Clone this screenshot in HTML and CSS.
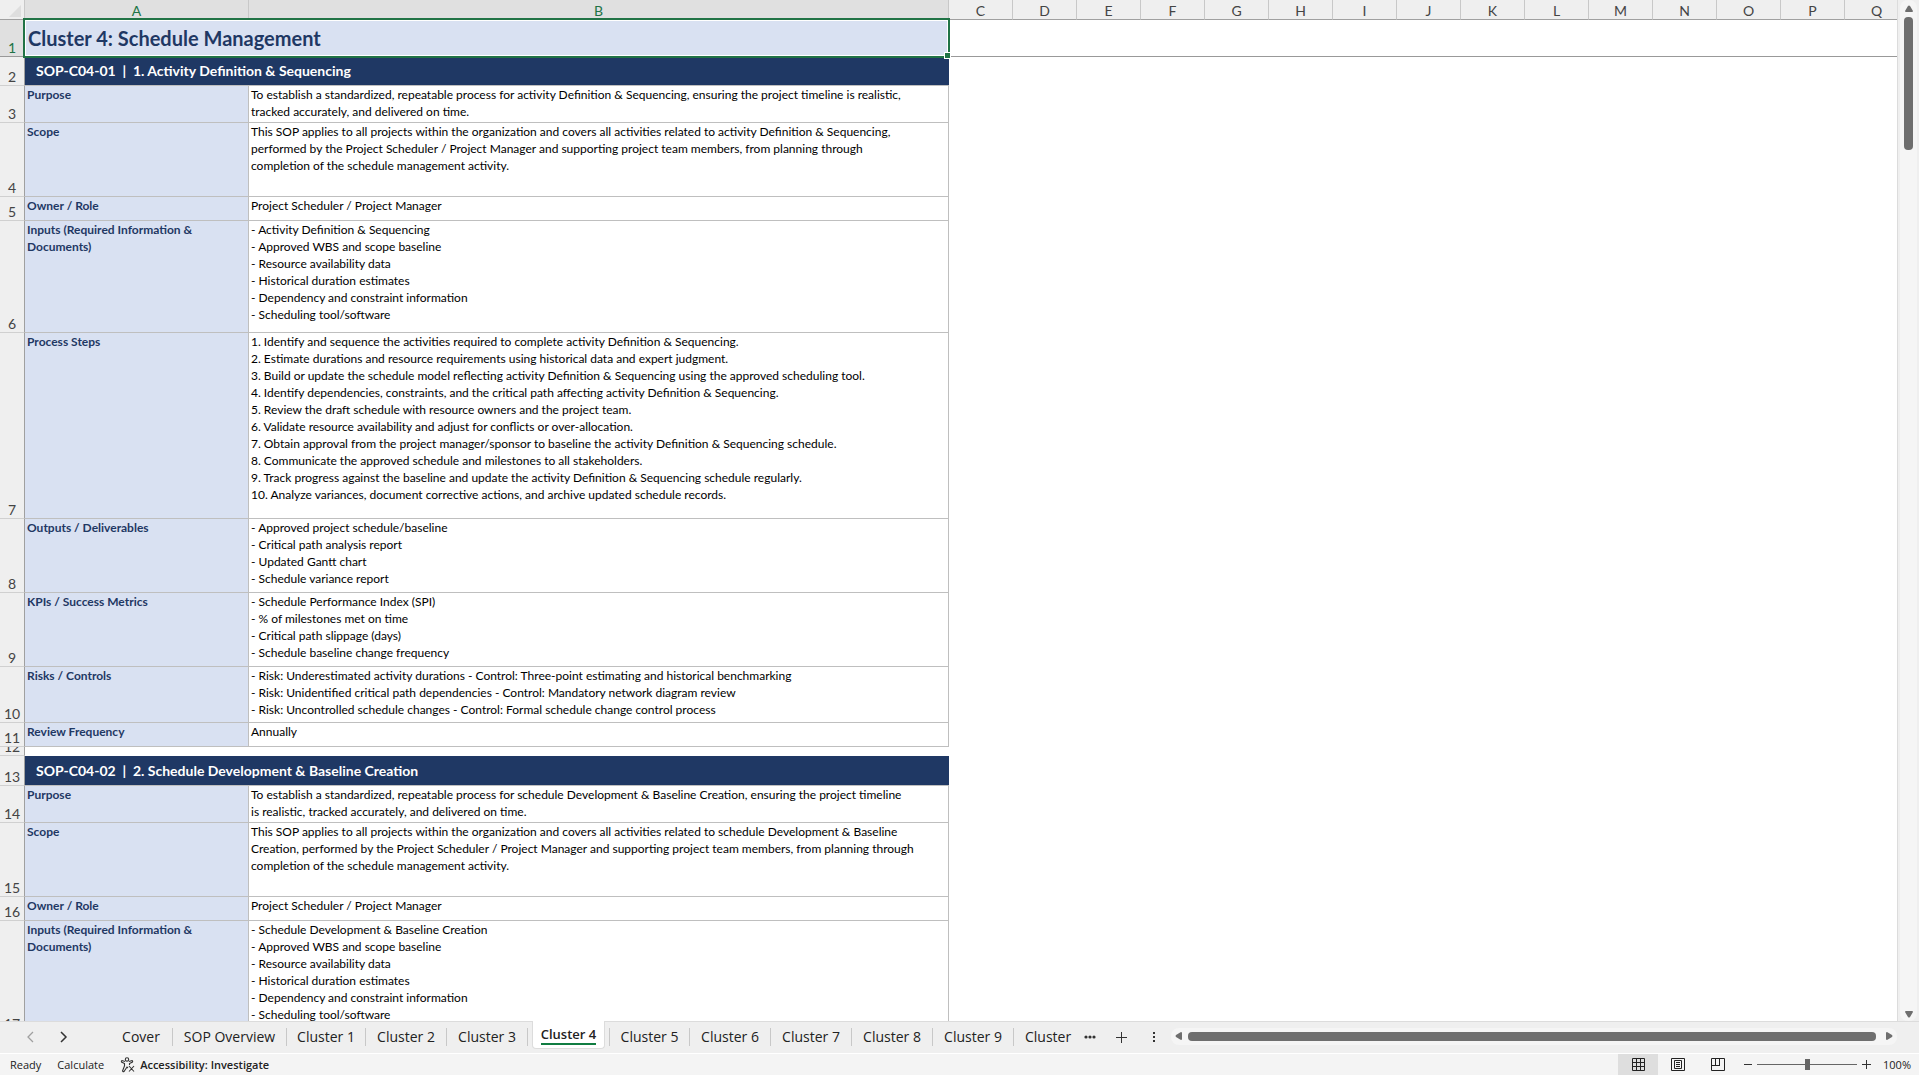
FILE: index.html
```html
<!DOCTYPE html>
<html lang="en">
<head>
    <meta charset="UTF-8">
    <meta name="viewport" content="width=device-width, initial-scale=1.0">
    <title>Cluster 4: Schedule Management</title>
    <link rel="stylesheet" href="styles.css">
</head>
<body>
    <main class="workspace">
        <div class="grid">
            <table class="sheet">
                <colgroup>
                    <col class="col-num">
                    <col class="col-a">
                    <col class="col-b">
                    <col span="15" class="col-std">
                </colgroup>
                <thead>
                    <tr>
                        <th class="corner"><svg width="12" height="12" viewBox="0 0 12 12"><path d="M12 0V12H0Z" fill="#dedede"/></svg></th>
                        <th class="active">A</th>
                        <th class="active">B</th>
                        <th>C</th><th>D</th><th>E</th><th>F</th><th>G</th><th>H</th><th>I</th><th>J</th><th>K</th><th>L</th><th>M</th><th>N</th><th>O</th><th>P</th><th>Q</th>
                    </tr>
                </thead>
                <tbody>
                    <tr class="row-title">
                        <th class="active">1</th>
                        <td class="title" colspan="2">Cluster 4: Schedule Management<span class="selection"></span></td>
                        <td class="blank" colspan="15"></td>
                    </tr>
                    <tr class="row-band">
                        <th>2</th>
                        <td class="band" colspan="2">SOP-C04-01 &nbsp;|&nbsp; 1. Activity Definition &amp; Sequencing</td>
                    </tr>
                    <tr class="row-2">
                        <th>3</th>
                        <td class="label">Purpose</td>
                        <td class="text">To establish a standardized, repeatable process for activity Definition &amp; Sequencing, ensuring the project timeline is realistic,<br>tracked accurately, and delivered on time.</td>
                    </tr>
                    <tr class="row-4">
                        <th>4</th>
                        <td class="label">Scope</td>
                        <td class="text">This SOP applies to all projects within the organization and covers all activities related to activity Definition &amp; Sequencing,<br>performed by the Project Scheduler / Project Manager and supporting project team members, from planning through<br>completion of the schedule management activity.</td>
                    </tr>
                    <tr class="row-1">
                        <th>5</th>
                        <td class="label">Owner / Role</td>
                        <td class="text">Project Scheduler / Project Manager</td>
                    </tr>
                    <tr class="row-6">
                        <th>6</th>
                        <td class="label">Inputs (Required Information &amp;<br>Documents)</td>
                        <td class="text">- Activity Definition &amp; Sequencing<br>- Approved WBS and scope baseline<br>- Resource availability data<br>- Historical duration estimates<br>- Dependency and constraint information<br>- Scheduling tool/software</td>
                    </tr>
                    <tr class="row-10">
                        <th>7</th>
                        <td class="label">Process Steps</td>
                        <td class="text">1. Identify and sequence the activities required to complete activity Definition &amp; Sequencing.<br>2. Estimate durations and resource requirements using historical data and expert judgment.<br>3. Build or update the schedule model reflecting activity Definition &amp; Sequencing using the approved scheduling tool.<br>4. Identify dependencies, constraints, and the critical path affecting activity Definition &amp; Sequencing.<br>5. Review the draft schedule with resource owners and the project team.<br>6. Validate resource availability and adjust for conflicts or over-allocation.<br>7. Obtain approval from the project manager/sponsor to baseline the activity Definition &amp; Sequencing schedule.<br>8. Communicate the approved schedule and milestones to all stakeholders.<br>9. Track progress against the baseline and update the activity Definition &amp; Sequencing schedule regularly.<br>10. Analyze variances, document corrective actions, and archive updated schedule records.</td>
                    </tr>
                    <tr class="row-4">
                        <th>8</th>
                        <td class="label">Outputs / Deliverables</td>
                        <td class="text">- Approved project schedule/baseline<br>- Critical path analysis report<br>- Updated Gantt chart<br>- Schedule variance report</td>
                    </tr>
                    <tr class="row-4">
                        <th>9</th>
                        <td class="label">KPIs / Success Metrics</td>
                        <td class="text">- Schedule Performance Index (SPI)<br>- % of milestones met on time<br>- Critical path slippage (days)<br>- Schedule baseline change frequency</td>
                    </tr>
                    <tr class="row-3">
                        <th>10</th>
                        <td class="label">Risks / Controls</td>
                        <td class="text">- Risk: Underestimated activity durations - Control: Three-point estimating and historical benchmarking<br>- Risk: Unidentified critical path dependencies - Control: Mandatory network diagram review<br>- Risk: Uncontrolled schedule changes - Control: Formal schedule change control process</td>
                    </tr>
                    <tr class="row-1">
                        <th>11</th>
                        <td class="label">Review Frequency</td>
                        <td class="text">Annually</td>
                    </tr>
                    <tr class="row-gap">
                        <th><div class="clip">12</div></th>
                        <td colspan="2"></td>
                    </tr>
                    <tr class="row-band-tall">
                        <th>13</th>
                        <td class="band" colspan="2">SOP-C04-02 &nbsp;|&nbsp; 2. Schedule Development &amp; Baseline Creation</td>
                    </tr>
                    <tr class="row-2">
                        <th>14</th>
                        <td class="label">Purpose</td>
                        <td class="text">To establish a standardized, repeatable process for schedule Development &amp; Baseline Creation, ensuring the project timeline<br>is realistic, tracked accurately, and delivered on time.</td>
                    </tr>
                    <tr class="row-4">
                        <th>15</th>
                        <td class="label">Scope</td>
                        <td class="text">This SOP applies to all projects within the organization and covers all activities related to schedule Development &amp; Baseline<br>Creation, performed by the Project Scheduler / Project Manager and supporting project team members, from planning through<br>completion of the schedule management activity.</td>
                    </tr>
                    <tr class="row-1">
                        <th>16</th>
                        <td class="label">Owner / Role</td>
                        <td class="text">Project Scheduler / Project Manager</td>
                    </tr>
                    <tr class="row-6">
                        <th>17</th>
                        <td class="label">Inputs (Required Information &amp;<br>Documents)</td>
                        <td class="text">- Schedule Development &amp; Baseline Creation<br>- Approved WBS and scope baseline<br>- Resource availability data<br>- Historical duration estimates<br>- Dependency and constraint information<br>- Scheduling tool/software</td>
                    </tr>
                </tbody>
            </table>
        </div>
        <div class="vscroll">
            <button class="arrow" aria-label="Scroll up"><svg width="10" height="8" viewBox="0 0 10 8"><path d="M4 1Q5 0 6 1L9 6Q9 7 8 7H2Q1 7 1 6Z" fill="#6e6e6e"/></svg></button>
            <div class="vthumb"></div>
            <button class="arrow arrow-end" aria-label="Scroll down"><svg width="10" height="8" viewBox="0 0 10 8"><path d="M4 7Q5 8 6 7L9 2Q9 1 8 1H2Q1 1 1 2Z" fill="#6e6e6e"/></svg></button>
        </div>
    </main>

    <nav class="tabbar">
        <div class="tab-arrows">
            <button aria-label="Previous sheet"><svg width="8" height="12" viewBox="0 0 8 12"><path d="M6 1L1 6L6 11" fill="none" stroke="#a0a0a0" stroke-width="1.3"/></svg></button>
            <button aria-label="Next sheet"><svg width="8" height="12" viewBox="0 0 8 12"><path d="M1 1L6 6L1 11" fill="none" stroke="#333" stroke-width="1.5"/></svg></button>
        </div>
        <div class="tabs">
            <button class="tab tab-cover">Cover</button>
            <button class="tab tab-overview">SOP Overview</button>
            <button class="tab tab-first">Cluster 1</button>
            <button class="tab">Cluster 2</button>
            <button class="tab">Cluster 3</button>
            <button class="tab current"><span>Cluster 4</span></button>
            <button class="tab tab-next">Cluster 5</button>
            <button class="tab">Cluster 6</button>
            <button class="tab">Cluster 7</button>
            <button class="tab">Cluster 8</button>
            <button class="tab">Cluster 9</button>
            <button class="tab tab-cut">Cluster 10</button>
        </div>
        <div class="tab-tools">
            <button aria-label="More sheets"><svg width="12" height="4" viewBox="0 0 12 4"><g fill="#333"><circle cx="2" cy="2" r="1.6"/><circle cx="6" cy="2" r="1.6"/><circle cx="10" cy="2" r="1.6"/></g></svg></button>
            <button aria-label="New sheet"><svg width="11" height="11" viewBox="0 0 11 11"><path d="M5.5 0V11M0 5.5H11" stroke="#333"/></svg></button>
            <button class="tab-resize" aria-label="Resize tabs"><svg width="2" height="10" viewBox="0 0 2 10"><path d="M0 0H2V2H0ZM0 4H2V6H0ZM0 8H2V10H0Z" fill="#333"/></svg></button>
        </div>
        <div class="hscroll">
            <button class="arrow" aria-label="Scroll left"><svg width="8" height="10" viewBox="0 0 8 10"><path d="M1 4Q0 5 1 6L6 9Q7 9 7 8V2Q7 1 6 1Z" fill="#6e6e6e"/></svg></button>
            <div class="hthumb"></div>
            <button class="arrow" aria-label="Scroll right"><svg width="8" height="10" viewBox="0 0 8 10"><path d="M7 4Q8 5 7 6L2 9Q1 9 1 8V2Q1 1 2 1Z" fill="#6e6e6e"/></svg></button>
        </div>
    </nav>

    <footer class="status">
        <span>Ready</span>
        <span>Calculate</span>
        <button class="access">
            <svg width="16" height="16" viewBox="0 0 16 16" fill="none" stroke="#333" stroke-width="1.1"><circle cx="7" cy="2.500" r="1.700"/><path d="M5 4.500L2 3.500Q1 4 1.500 5L4.500 6.500V9L2.500 14Q3 15 4 14.500L7 10L8 11M9 4.500L12 3.500Q13 4 12.500 5L9.500 6.500V8M9 9L14 14.500M14 9L9 14.500"/></svg>
            Accessibility: Investigate
        </button>
        <div class="views">
            <button class="view on" aria-label="Normal"><svg width="13" height="13" viewBox="0 0 13 13" fill="none" stroke="#222"><path d="M.5 .5H12.500V12.500H.5ZM4.500 0V13M8.500 0V13M0 4.500H13M0 8.500H13"/></svg></button>
            <button class="view" aria-label="Page Layout"><svg width="14" height="13" viewBox="0 0 14 13" fill="none" stroke="#222"><path d="M.5 .5H13.500V12.500H.5ZM3.500 2.500H10.500V10.500H3.500ZM5 4.500H9M5 6.500H9M5 8.500H9"/></svg></button>
            <button class="view" aria-label="Page Break Preview"><svg width="14" height="13" viewBox="0 0 14 13" fill="none" stroke="#222"><path d="M.5 .5H13.500V12.500H.5ZM4.500 0V7.500M0 7.500H9M8.500 0V8"/></svg></button>
        </div>
        <div class="zoom">
            <button aria-label="Zoom out"><svg width="8" height="9" viewBox="0 0 8 9"><path d="M0 4.500H8" stroke="#333"/></svg></button>
            <input type="range" min="0" max="100" value="50" aria-label="Zoom">
            <button aria-label="Zoom in"><svg width="9" height="9" viewBox="0 0 9 9"><path d="M0 4.500H9M4.500 0V9" stroke="#333"/></svg></button>
            <span class="percent">100%</span>
        </div>
    </footer>
</body>
</html>
```
FILE: styles.css
```css
* {
    box-sizing: border-box;
}

body {
    margin: 0;
    height: 100vh;
    display: flex;
    flex-direction: column;
    overflow: hidden;
    background-color: #efefef;
    color: #222;
    font-family: "Open Sans", "Noto Sans", sans-serif;
    font-size: 11px;
}

button {
    padding: 0;
    border: 0;
    background: none;
    color: inherit;
    font: inherit;
}

svg {
    display: block;
}

/* Worksheet */
.workspace {
    flex: 1;
    min-height: 0;
    display: flex;
}

.grid {
    flex: 1;
    min-width: 0;
    overflow: hidden;
    background-color: #fff;
    border-right: 1px solid #dcdcdc;
}

.sheet {
    width: 1909px;
    table-layout: fixed;
    border-collapse: separate;
    border-spacing: 0;
    font-family: Lato, "Liberation Sans", sans-serif;
}

.col-num { width: 25px; }
.col-a { width: 224px; }
.col-b { width: 700px; }
.col-std { width: 64px; }

th, td {
    padding: 0;
}

th {
    background-color: #efefef;
    color: #444;
    font-size: 14px;
    font-weight: normal;
    line-height: 17px;
}

thead th {
    height: 20px;
    padding-top: 2px;
    border-right: 1px solid #c8c8c8;
    border-bottom: 1px solid #a0a0a0;
}

tbody th {
    vertical-align: bottom;
    border-right: 1px solid #a0a0a0;
    border-bottom: 1px solid #d0d0d0;
}

th.active {
    background-color: #e0e0e0;
    color: #217346;
}

.corner svg {
    margin-left: 9px;
}

.row-title { height: 37px; }
.row-band { height: 29px; }
.row-band-tall { height: 30px; }
.row-gap { height: 9px; }
.row-1 { height: 24px; }
.row-2 { height: 37px; }
.row-3 { height: 56px; }
.row-4 { height: 74px; }
.row-6 { height: 112px; }
.row-10 { height: 186px; }

.title {
    position: relative;
    padding: 0 0 1px 3px;
    background-color: #d9e1f2;
    color: #1f3864;
    font-size: 20px;
    line-height: 24px;
    font-weight: bold;
}

.row-title th, .blank {
    border-bottom: 1px solid #999;
}

/* Selected cell outline, drawn over the cell edges */
.selection {
    position: absolute;
    z-index: 1;
    inset: -2px -1px -1px -2px;
    border: 2px solid #217346;
    box-shadow: inset 0 0 0 1px #fff;
}

.selection::after {
    content: "";
    position: absolute;
    right: -2px;
    bottom: -2px;
    width: 5px;
    height: 5px;
    background-color: #217346;
    box-shadow: 0 0 0 1px #fff;
}

.band {
    padding-left: 11px;
    background-color: #1f3864;
    color: #fff;
    font-size: 14px;
    line-height: 18px;
    font-weight: bold;
    border-bottom: 1px solid #bfbfbf;
}

.label, .text {
    padding: 0 2px;
    vertical-align: top;
    font-size: 12px;
    line-height: 17px;
    white-space: nowrap;
    border-right: 1px solid #bfbfbf;
    border-bottom: 1px solid #bfbfbf;
}

.label {
    background-color: #d9e1f2;
    color: #1f3864;
    font-weight: bold;
}

.text {
    color: #000;
}

.clip {
    height: 8px;
    display: flex;
    align-items: flex-end;
    justify-content: center;
    overflow: hidden;
}

/* Scrollbars */
.vscroll {
    width: 17px;
    margin: 0 2px;
    padding: 5px 0 3px;
    display: flex;
    flex-direction: column;
    align-items: center;
    background-color: #f5f5f5;
    border-radius: 8px;
}

.vthumb {
    width: 9px;
    height: 133px;
    margin-top: 4px;
    border-radius: 4px;
    background-color: #6e6e6e;
}

.arrow-end {
    margin-top: auto;
}

.hscroll {
    flex: 1;
    height: 17px;
    margin: 0 22px 2px 0;
    padding: 0 4px;
    display: flex;
    align-items: center;
    background-color: #f5f5f5;
    border-radius: 8px;
}

.hthumb {
    flex: 1;
    height: 9px;
    margin: 0 9px 0 5px;
    border-radius: 4px;
    background-color: #6e6e6e;
}

/* Sheet tabs */
.tabbar {
    height: 32px;
    padding-bottom: 1px;
    display: flex;
    align-items: center;
    border-top: 1px solid #dcdcdc;
    font-size: 14px;
}

.tab-arrows {
    width: 110px;
    padding-left: 27px;
    display: flex;
    gap: 25px;
}

.tabs {
    display: flex;
    align-items: center;
    height: 100%;
}

.tab {
    width: 81px;
    height: 18px;
    line-height: 18px;
    white-space: nowrap;
    border-right: 1px solid #c8c8c8;
}

.tab-cover {
    width: 63px;
}

.tab-overview {
    width: 114px;
}

.tab-first {
    width: 79px;
}

.tab-next {
    border-left: 1px solid #c8c8c8;
}

.tab-cut {
    width: 60px;
    padding-left: 11px;
    text-align: left;
    overflow: hidden;
    border-right: 0;
}

.current {
    align-self: flex-start;
    width: 73px;
    height: 28px;
    margin: -1px 4px 0;
    background-color: #fff;
    border: 1px solid #dcdcdc;
    border-top: 0;
    border-radius: 0 0 4px 4px;
    font-size: 13px;
    font-weight: 600;
}

.current span {
    display: inline-block;
    border-bottom: 2px solid #107c41;
}

.tab-tools {
    width: 97px;
    padding: 0 16px 0 10px;
    display: flex;
    align-items: center;
    gap: 20px;
}

.tab-resize {
    margin-left: auto;
}

/* Status bar */
.status {
    height: 22px;
    padding: 0 8px 0 10px;
    display: flex;
    align-items: center;
    gap: 16px;
    background-color: #f4f4f4;
    border-top: 1px solid #fff;
}

.access {
    display: flex;
    align-items: center;
    gap: 4px;
    font-weight: 600;
}

.views {
    display: flex;
    align-self: stretch;
    margin-left: auto;
}

.view {
    width: 40px;
    display: flex;
    align-items: center;
    justify-content: center;
}

.on {
    background-color: #dedede;
}

.zoom {
    display: flex;
    align-items: center;
    gap: 5px;
    margin-left: -10px;
}

.zoom input {
    appearance: none;
    width: 100px;
    height: 11px;
    margin: 0;
    background: linear-gradient(#666, #666) center / 100% 1px no-repeat;
}

.zoom input::-webkit-slider-thumb {
    appearance: none;
    width: 5px;
    height: 11px;
    background-color: #666;
}

.percent {
    margin-left: 7px;
}
```
